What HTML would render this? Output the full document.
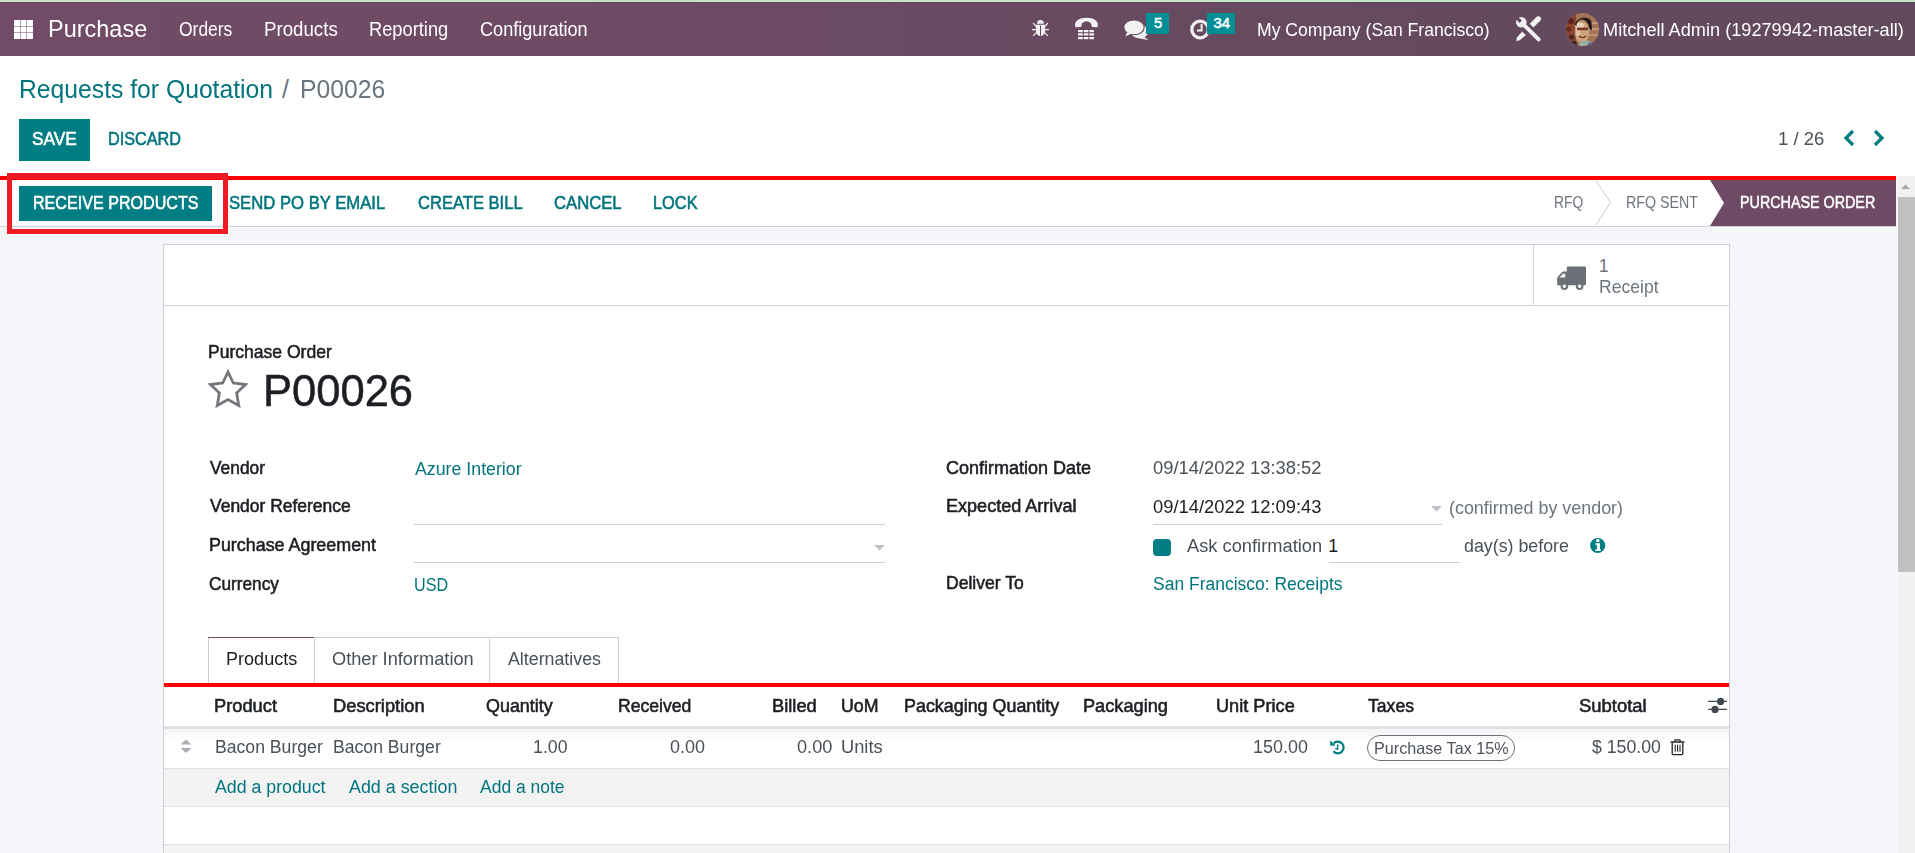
<!DOCTYPE html>
<html><head><meta charset="utf-8"><title>Purchase</title><style>
*{margin:0;padding:0;box-sizing:border-box}
html,body{width:1915px;height:853px;overflow:hidden;background:#F5F6FA;font-family:'Liberation Sans',sans-serif}
.a{position:absolute}
.t{position:absolute;white-space:nowrap;line-height:normal;font-family:'Liberation Sans',sans-serif}
svg{position:absolute;overflow:visible}
</style></head>
<body>
<div class="a" style="left:0px;top:0px;width:1915px;height:2px;background:#C6E5C7;"></div>
<div class="a" style="left:0px;top:2px;width:1915px;height:54px;background:linear-gradient(90deg,#714B67 0%,#6E4B65 35%,#6A4A62 50%,#664A5F 68%,#624A5D 100%);"></div>
<div class="a" style="left:0px;top:2px;width:1915px;height:1px;background:linear-gradient(90deg,#6B4263,#5D4357);"></div>
<div class="a" style="left:0px;top:56px;width:1915px;height:120px;background:#FFFFFF;"></div>
<div class="a" style="left:0px;top:176px;width:1896px;height:50px;background:#FFFFFF;"></div>
<div class="a" style="left:0px;top:226px;width:1896px;height:1px;background:#CDD0D6;"></div>
<div class="a" style="left:163px;top:244px;width:1567px;height:609px;background:#FFFFFF;border:1px solid #CDD0D7;border-bottom:none"></div>
<div class="a" style="left:164px;top:305px;width:1565px;height:1px;background:#CED1D8;"></div>
<div class="a" style="left:1533px;top:245px;width:1px;height:60px;background:#D3D6DC;"></div>
<div class="a" style="left:1896px;top:176px;width:19px;height:677px;background:#F1F1F1;border-left:2px solid #F7F7F7"></div>
<div class="a" style="left:1898px;top:197px;width:17px;height:375px;background:#C1C1C1;"></div>
<svg style="left:1898px;top:180px" width="15" height="14"><polygon points="3,9 12,9 7.5,4.5" fill="#A3AFA3"/></svg>
<svg style="left:14px;top:20px" width="19" height="19"><rect x="0.0" y="0.0" width="6" height="6" fill="#fff"/><rect x="6.5" y="0.0" width="6" height="6" fill="#fff"/><rect x="13.0" y="0.0" width="6" height="6" fill="#fff"/><rect x="0.0" y="6.5" width="6" height="6" fill="#fff"/><rect x="6.5" y="6.5" width="6" height="6" fill="#fff"/><rect x="13.0" y="6.5" width="6" height="6" fill="#fff"/><rect x="0.0" y="13.0" width="6" height="6" fill="#fff"/><rect x="6.5" y="13.0" width="6" height="6" fill="#fff"/><rect x="13.0" y="13.0" width="6" height="6" fill="#fff"/></svg>
<div class="a" style="left:19px;top:119px;width:71px;height:42px;background:#017E84;"></div>
<svg style="left:1840px;top:126px" width="50" height="24"><polyline points="13,5 6,12 13,19" fill="none" stroke="#017E84" stroke-width="3.2"/><polyline points="35,5 42,12 35,19" fill="none" stroke="#017E84" stroke-width="3.2"/></svg>
<div class="a" style="left:19px;top:186px;width:193px;height:35px;background:#017E84;"></div>
<svg style="left:1590px;top:180px" width="30" height="46"><polyline points="6,1 20.5,22.5 6,45" fill="none" stroke="#C9CBD0" stroke-width="1"/></svg>
<svg style="left:1700px;top:180px" width="196" height="46"><polygon points="10,0 196,0 196,46 10,46 24,23" fill="#6E4A65"/></svg>
<div class="a" style="left:0px;top:176px;width:1896px;height:4px;background:#FF0000;"></div>
<div class="a" style="left:7px;top:173px;width:221px;height:61px;background:transparent;border:5px solid #ED1C24;border-top-width:6px"></div>
<svg style="left:1556px;top:265px" width="32" height="26" viewBox="0 0 32 26">
<rect x="10.8" y="1.6" width="19.2" height="18.6" rx="1.2" fill="#6B6F76"/>
<path d="M1.2 20.2 V13.2 Q1.2 12.4 1.8 11.8 L6 7.2 Q6.6 6.6 7.4 6.6 H11 V20.2 z" fill="#6B6F76"/>
<path d="M3.4 12.6 L7 8.8 H9.2 V12.6 z" fill="#fff"/>
<circle cx="8.4" cy="21.2" r="3.8" fill="#6B6F76"/><circle cx="8.4" cy="21.2" r="1.7" fill="#fff"/>
<circle cx="23.6" cy="21.2" r="3.8" fill="#6B6F76"/><circle cx="23.6" cy="21.2" r="1.7" fill="#fff"/>
</svg>
<svg style="left:207px;top:369px" width="42" height="41" viewBox="0 0 42 41"><polygon points="21,3 26.3,14 38.5,15.5 29.6,24 31.8,36.5 21,30.5 10.2,36.5 12.4,24 3.5,15.5 15.7,14" fill="none" stroke="#75777C" stroke-width="2.8" stroke-linejoin="miter"/></svg>
<div class="a" style="left:414px;top:524px;width:471px;height:1px;background:#CED0D5;"></div>
<div class="a" style="left:414px;top:562px;width:471px;height:1px;background:#CED0D5;"></div>
<div class="a" style="left:1153px;top:524px;width:289px;height:1px;background:#CED0D5;"></div>
<div class="a" style="left:1329px;top:562px;width:131px;height:1px;background:#CED0D5;"></div>
<svg style="left:874px;top:545px" width="11" height="6"><polygon points="0,0 11,0 5.5,5.5" fill="#BFC1C7"/></svg>
<svg style="left:1431px;top:506px" width="11" height="6"><polygon points="0,0 11,0 5.5,5.5" fill="#BFC1C7"/></svg>
<div class="a" style="left:1153px;top:539px;width:18px;height:17px;background:#017E84;border-radius:4px"></div>
<svg style="left:1590px;top:538px" width="16" height="16" viewBox="0 0 16 16"><circle cx="7.7" cy="7.5" r="7.6" fill="#017E84"/><rect x="6.2" y="1.2" width="3.2" height="2.7" rx="0.5" fill="#fff"/><path d="M5.2 5.3 H10 V11.6 H10.8 V13 H5.2 V11.6 H6.9 V6.7 H5.2 z" fill="#fff"/></svg>
<div class="a" style="left:208px;top:637px;width:1px;height:46px;background:#CDD0D7;"></div>
<div class="a" style="left:208px;top:637px;width:107px;height:1px;background:#6E4A66;"></div>
<div class="a" style="left:314px;top:637px;width:1px;height:46px;background:#CDD0D7;"></div>
<div class="a" style="left:315px;top:637px;width:175px;height:1px;background:#CDD0D7;"></div>
<div class="a" style="left:489px;top:637px;width:1px;height:46px;background:#CDD0D7;"></div>
<div class="a" style="left:490px;top:637px;width:129px;height:1px;background:#CDD0D7;"></div>
<div class="a" style="left:618px;top:637px;width:1px;height:46px;background:#CDD0D7;"></div>
<div class="a" style="left:164px;top:683px;width:1565px;height:4px;background:#FF0000;"></div>
<div class="a" style="left:164px;top:726px;width:1565px;height:3px;background:#DEE1E5;"></div>
<div class="a" style="left:164px;top:729px;width:1565px;height:13px;background:linear-gradient(#F3F4F5,#FFFFFF);"></div>
<div class="a" style="left:164px;top:768px;width:1565px;height:1px;background:#DFE1E5;"></div>
<div class="a" style="left:164px;top:769px;width:1565px;height:37px;background:#F3F3F4;"></div>
<div class="a" style="left:164px;top:806px;width:1565px;height:1px;background:#DFE1E5;"></div>
<div class="a" style="left:164px;top:844px;width:1565px;height:1px;background:#DFE1E5;"></div>
<div class="a" style="left:164px;top:845px;width:1565px;height:8px;background:#F3F3F4;"></div>
<svg style="left:180px;top:739px" width="12" height="15"><polygon points="6,0.5 11.5,5.5 0.5,5.5" fill="#A9ADB3"/><polygon points="0.5,9 11.5,9 6,14" fill="#A9ADB3"/></svg>
<svg style="left:1329px;top:739px" width="17" height="17" viewBox="0 0 17 17"><path d="M4.7 4.4 A5.8 5.8 0 1 1 4.36 12.23" fill="none" stroke="#017E84" stroke-width="2.3"/><polygon points="1.2,1.5 1.2,6.7 6.7,6.6" fill="#017E84"/><path d="M8.7 5.4 V9.9 H6.2" fill="none" stroke="#017E84" stroke-width="1.5"/></svg>
<div class="a" style="left:1367px;top:735px;width:148px;height:26px;background:transparent;border:1.3px solid #6D7076;border-radius:13px"></div>
<svg style="left:1670px;top:738.6px" width="16" height="17" viewBox="0 0 16 17"><path d="M0.6 3 H14.4" stroke="#212529" stroke-width="1.5"/><path d="M4.8 2.8 V1.6 Q4.8 0.8 5.6 0.8 H9.4 Q10.2 0.8 10.2 1.6 V2.8" fill="none" stroke="#212529" stroke-width="1.2"/><path d="M2.2 3.4 V14.6 Q2.2 15.6 3.2 15.6 H11.8 Q12.8 15.6 12.8 14.6 V3.4" fill="none" stroke="#212529" stroke-width="1.3"/><path d="M5.2 5.8 V12.8 M7.6 5.8 V12.8 M10 5.8 V12.8" stroke="#212529" stroke-width="1.1"/></svg>
<svg style="left:1707px;top:696px" width="21" height="18"><path d="M1 5.4 H20 M1 13.4 H20" stroke="#404852" stroke-width="1.3"/><circle cx="13.6" cy="5.4" r="3.6" fill="#404852"/><circle cx="8" cy="13.4" r="3.6" fill="#404852"/></svg>
<svg style="left:1031px;top:19px" width="19" height="18" viewBox="0 0 19 18">
<path d="M6.1 4.8 A3.4 3.7 0 0 1 12.9 4.8 z" fill="#F2F2F2"/>
<path d="M4.9 5.7 H14.1 V11.8 A4.6 5.2 0 0 1 4.9 11.8 z" fill="#F2F2F2"/>
<path d="M9.5 6.6 V16.8" stroke="#5F4A5C" stroke-width="1"/>
<path d="M5.2 7.2 L2.4 4.4 M13.8 7.2 L16.6 4.4 M5 10.6 H1.4 M14 10.6 H17.6 M5.4 13.6 L2.6 16.4 M13.6 13.6 L16.4 16.4" stroke="#F2F2F2" stroke-width="1.3" stroke-linecap="round"/>
</svg>
<svg style="left:1074px;top:16px" width="25" height="25" viewBox="0 0 25 25">
<path d="M1 9 C1 4.5 6 1.7 12.5 1.7 C19 1.7 24 4.5 24 9 L23.4 11.2 L18 11 L17 7.6 C15.6 6 14 5.2 12.5 5.2 C11 5.2 9.4 6 8 7.6 L7 11 L1.6 11.2 z" fill="#F2F2F2"/>
<rect x="4" y="14" width="4.8" height="2.2" fill="#F2F2F2"/><rect x="9.8" y="14" width="4.6" height="2.2" fill="#F2F2F2"/><rect x="15.4" y="14" width="4.6" height="2.2" fill="#F2F2F2"/>
<rect x="4" y="17.3" width="4.8" height="2.2" fill="#F2F2F2"/><rect x="9.8" y="17.3" width="4.6" height="2.2" fill="#F2F2F2"/><rect x="15.4" y="17.3" width="4.6" height="2.2" fill="#F2F2F2"/>
<rect x="4" y="21" width="4.8" height="2.2" fill="#F2F2F2"/><rect x="9.8" y="21" width="4.6" height="2.2" fill="#F2F2F2"/><rect x="15.4" y="21" width="4.6" height="2.2" fill="#F2F2F2"/>
</svg>
<svg style="left:1120px;top:12px" width="32" height="32" viewBox="0 0 32 32">
<ellipse cx="19.5" cy="19.6" rx="9" ry="6.6" fill="#F2F2F2"/>
<polygon points="22,23.5 28.6,28 18.5,26.2" fill="#F2F2F2"/>
<ellipse cx="14" cy="15.4" rx="10.2" ry="7.4" fill="#F2F2F2" stroke="#6A4A62" stroke-width="1.1"/>
<polygon points="7,20.4 5.4,24.4 11.6,21.6" fill="#F2F2F2"/>
</svg>
<div class="a" style="left:1146px;top:13px;width:23px;height:21px;background:#028E96;"></div>
<svg style="left:1189px;top:18px" width="22" height="23" viewBox="0 0 22 23">
<circle cx="11.1" cy="11.5" r="8.3" fill="none" stroke="#F2F2F2" stroke-width="3.2"/>
<path d="M12.6 6 V12.4 H8" fill="none" stroke="#F2F2F2" stroke-width="2"/>
</svg>
<div class="a" style="left:1207px;top:13px;width:28px;height:21px;background:#028E96;"></div>
<svg style="left:1512px;top:12px" width="34" height="34" viewBox="0 0 34 34">
<defs><mask id="wm"><rect width="34" height="34" fill="#fff"/><polygon points="9.9,8.6 5.2,3.9 2.9,6.2 7.6,10.9" fill="#000"/></mask></defs>
<circle cx="9.3" cy="10.3" r="5.3" fill="#F2F2F2" mask="url(#wm)"/>
<path d="M10.6 11.6 L26.6 27.4" stroke="#F2F2F2" stroke-width="3.9" stroke-linecap="round"/>
<path d="M19.6 13.6 L26.4 6.8" stroke="#F2F2F2" stroke-width="5.2"/>
<circle cx="26.4" cy="6.8" r="2.6" fill="#F2F2F2"/>
<polygon points="10.2,19.4 13.9,23 7.4,28.6 4.3,29 4.7,25.8" fill="#F2F2F2"/>
</svg>
<svg style="left:1566px;top:13px" width="34" height="34" viewBox="0 0 34 34">
<defs><clipPath id="av"><circle cx="16.5" cy="16.5" r="16.6"/></clipPath></defs>
<g clip-path="url(#av)">
<rect width="34" height="34" fill="#A47456"/>
<rect x="0" y="0" width="10" height="34" fill="#8A4632"/>
<circle cx="5" cy="8" r="3.2" fill="#5E2418"/><circle cx="3" cy="16" r="2.6" fill="#6A2C1E"/><circle cx="5.5" cy="24" r="2.6" fill="#4A2420"/><circle cx="8" cy="31" r="3" fill="#2A2224"/>
<rect x="23" y="9" width="11" height="2" fill="#C8A080" opacity="0.8"/><rect x="23" y="15" width="11" height="2" fill="#C8A080" opacity="0.8"/><rect x="23" y="21" width="11" height="2" fill="#C8A080" opacity="0.7"/>
<ellipse cx="16" cy="19" rx="7.2" ry="11" fill="#CFA47C"/>
<ellipse cx="13.5" cy="12.5" rx="4.6" ry="3" fill="#E4D0B4"/>
<rect x="10" y="14" width="4" height="9" fill="#E6D6C0" opacity="0.6"/>
<path d="M9 12 C9 4 24 2 25.5 9 L26 17 L23.5 16 C22.5 9 19 6.5 16 6.5 C12.5 6.5 10.5 9 10.5 13 z" fill="#1E1A1E"/>
<rect x="11" y="14.6" width="11" height="2.6" fill="#6A2A1C" opacity="0.9"/>
<path d="M13 23 C15 25 18 25 20 23" stroke="#7A3A24" stroke-width="1.6" fill="none"/>
<ellipse cx="20" cy="32" rx="7" ry="4.5" fill="#9AAEA2"/>
<circle cx="24" cy="31" r="2" fill="#5A70A8"/>
</g></svg>
<div class="t" style="left:48.1px;top:15.0px;font-size:24.71px;font-weight:400;letter-spacing:0.0px;color:#FFFFFF;transform:scaleX(0.9505);transform-origin:0 0;">Purchase</div>
<div class="t" style="left:179.1px;top:18.0px;font-size:19.48px;font-weight:400;letter-spacing:0.0px;color:#FFFFFF;transform:scaleX(0.8966);transform-origin:0 0;">Orders</div>
<div class="t" style="left:264.08px;top:18.0px;font-size:19.48px;font-weight:400;letter-spacing:0.0px;color:#FFFFFF;transform:scaleX(0.9595);transform-origin:0 0;">Products</div>
<div class="t" style="left:369.12px;top:18.0px;font-size:19.48px;font-weight:400;letter-spacing:0.0px;color:#FFFFFF;transform:scaleX(0.9383);transform-origin:0 0;">Reporting</div>
<div class="t" style="left:480.07px;top:18.0px;font-size:19.48px;font-weight:400;letter-spacing:0.0px;color:#FFFFFF;transform:scaleX(0.9298);transform-origin:0 0;">Configuration</div>
<div class="t" style="left:1257.07px;top:19.0px;font-size:18.9px;font-weight:400;letter-spacing:0.0px;color:#FFFFFF;transform:scaleX(0.9315);transform-origin:0 0;">My Company (San Francisco)</div>
<div class="t" style="left:1603.04px;top:19.0px;font-size:18.9px;font-weight:400;letter-spacing:0.0px;color:#FFFFFF;transform:scaleX(0.9614);transform-origin:0 0;">Mitchell Admin (19279942-master-all)</div>
<div class="t" style="left:1154.0px;top:14.9px;font-size:14.83px;font-weight:400;letter-spacing:0.0px;color:#FFFFFF;-webkit-text-stroke:0.55px #FFFFFF;">5</div>
<div class="t" style="left:1213.5px;top:14.9px;font-size:14.83px;font-weight:400;letter-spacing:0.0px;color:#FFFFFF;-webkit-text-stroke:0.55px #FFFFFF;">34</div>
<div class="t" style="left:19.02px;top:74.7px;font-size:25.0px;font-weight:400;letter-spacing:0.0px;color:#01747C;transform:scaleX(0.9882);transform-origin:0 0;">Requests for Quotation</div>
<div class="t" style="left:282.0px;top:74.7px;font-size:25.0px;font-weight:400;letter-spacing:0.0px;color:#6C757D;">/</div>
<div class="t" style="left:300.02px;top:74.7px;font-size:25.0px;font-weight:400;letter-spacing:0.0px;color:#6C757D;transform:scaleX(0.988);transform-origin:0 0;">P00026</div>
<div class="t" style="left:32.34px;top:128.7px;font-size:18.02px;font-weight:400;letter-spacing:0.0px;color:#FFFFFF;-webkit-text-stroke:0.55px #FFFFFF;transform:scaleX(0.96);transform-origin:0 0;">SAVE</div>
<div class="t" style="left:108.3px;top:128.7px;font-size:18.02px;font-weight:400;letter-spacing:0.0px;color:#01747C;-webkit-text-stroke:0.55px #01747C;transform:scaleX(0.9);transform-origin:0 0;">DISCARD</div>
<div class="t" style="left:1777.7px;top:128.0px;font-size:18.6px;font-weight:400;letter-spacing:0.0px;color:#495057;transform:scaleX(0.9956);transform-origin:0 0;">1 / 26</div>
<div class="t" style="left:32.71px;top:192.7px;font-size:18.02px;font-weight:400;letter-spacing:0.0px;color:#FFFFFF;-webkit-text-stroke:0.55px #FFFFFF;transform:scaleX(0.8935);transform-origin:0 0;">RECEIVE PRODUCTS</div>
<div class="t" style="left:229.38px;top:192.8px;font-size:18.02px;font-weight:400;letter-spacing:0.0px;color:#01747C;-webkit-text-stroke:0.55px #01747C;transform:scaleX(0.925);transform-origin:0 0;">SEND PO BY EMAIL</div>
<div class="t" style="left:417.68px;top:192.8px;font-size:18.02px;font-weight:400;letter-spacing:0.0px;color:#01747C;-webkit-text-stroke:0.55px #01747C;transform:scaleX(0.9195);transform-origin:0 0;">CREATE BILL</div>
<div class="t" style="left:553.98px;top:192.8px;font-size:18.02px;font-weight:400;letter-spacing:0.0px;color:#01747C;-webkit-text-stroke:0.55px #01747C;transform:scaleX(0.925);transform-origin:0 0;">CANCEL</div>
<div class="t" style="left:653.49px;top:192.8px;font-size:18.02px;font-weight:400;letter-spacing:0.0px;color:#01747C;-webkit-text-stroke:0.55px #01747C;transform:scaleX(0.9083);transform-origin:0 0;">LOCK</div>
<div class="t" style="left:1554.17px;top:192.9px;font-size:16.72px;font-weight:400;letter-spacing:0.0px;color:#6C757D;transform:scaleX(0.8294);transform-origin:0 0;">RFQ</div>
<div class="t" style="left:1626.05px;top:192.9px;font-size:16.72px;font-weight:400;letter-spacing:0.0px;color:#6C757D;transform:scaleX(0.853);transform-origin:0 0;">RFQ SENT</div>
<div class="t" style="left:1739.84px;top:192.9px;font-size:16.72px;font-weight:400;letter-spacing:0.0px;color:#FFFFFF;-webkit-text-stroke:0.55px #FFFFFF;transform:scaleX(0.8571);transform-origin:0 0;">PURCHASE ORDER</div>
<div class="t" style="left:1598.8px;top:255.7px;font-size:17.88px;font-weight:400;letter-spacing:0.0px;color:#6C757D;">1</div>
<div class="t" style="left:1598.82px;top:277.0px;font-size:17.88px;font-weight:400;letter-spacing:0.0px;color:#6C757D;transform:scaleX(0.9831);transform-origin:0 0;">Receipt</div>
<div class="t" style="left:208.44px;top:341.0px;font-size:18.31px;font-weight:400;letter-spacing:0.0px;color:#1C1F23;-webkit-text-stroke:0.55px #1C1F23;transform:scaleX(0.9586);transform-origin:0 0;">Purchase Order</div>
<div class="t" style="left:263.26px;top:365.6px;font-size:44.19px;font-weight:400;letter-spacing:0.0px;color:#1C1F23;-webkit-text-stroke:0.5px #1C1F23;transform:scaleX(0.985);transform-origin:0 0;">P00026</div>
<div class="t" style="left:209.7px;top:457.7px;font-size:17.88px;font-weight:400;letter-spacing:0.0px;color:#1C1F23;-webkit-text-stroke:0.55px #1C1F23;transform:scaleX(0.9719);transform-origin:0 0;">Vendor</div>
<div class="t" style="left:209.7px;top:496.4px;font-size:17.88px;font-weight:400;letter-spacing:0.0px;color:#1C1F23;-webkit-text-stroke:0.55px #1C1F23;transform:scaleX(0.9771);transform-origin:0 0;">Vendor Reference</div>
<div class="t" style="left:208.7px;top:534.6px;font-size:17.88px;font-weight:400;letter-spacing:0.0px;color:#1C1F23;-webkit-text-stroke:0.55px #1C1F23;transform:scaleX(1.0012);transform-origin:0 0;">Purchase Agreement</div>
<div class="t" style="left:208.73px;top:573.8px;font-size:17.88px;font-weight:400;letter-spacing:0.0px;color:#1C1F23;-webkit-text-stroke:0.55px #1C1F23;transform:scaleX(0.9653);transform-origin:0 0;">Currency</div>
<div class="t" style="left:415.0px;top:458.6px;font-size:17.88px;font-weight:400;letter-spacing:0.0px;color:#01747C;transform:scaleX(0.9944);transform-origin:0 0;">Azure Interior</div>
<div class="t" style="left:414.1px;top:574.7px;font-size:17.88px;font-weight:400;letter-spacing:0.0px;color:#01747C;transform:scaleX(0.9028);transform-origin:0 0;">USD</div>
<div class="t" style="left:946.39px;top:457.7px;font-size:17.88px;font-weight:400;letter-spacing:0.0px;color:#1C1F23;-webkit-text-stroke:0.55px #1C1F23;transform:scaleX(1.0084);transform-origin:0 0;">Confirmation Date</div>
<div class="t" style="left:946.39px;top:496.4px;font-size:17.88px;font-weight:400;letter-spacing:0.0px;color:#1C1F23;-webkit-text-stroke:0.55px #1C1F23;transform:scaleX(1.011);transform-origin:0 0;">Expected Arrival</div>
<div class="t" style="left:946.42px;top:573.0px;font-size:17.88px;font-weight:400;letter-spacing:0.0px;color:#1C1F23;-webkit-text-stroke:0.55px #1C1F23;transform:scaleX(0.9821);transform-origin:0 0;">Deliver To</div>
<div class="t" style="left:1152.67px;top:457.7px;font-size:17.88px;font-weight:400;letter-spacing:0.0px;color:#495057;transform:scaleX(1.0284);transform-origin:0 0;">09/14/2022 13:38:52</div>
<div class="t" style="left:1152.67px;top:497.3px;font-size:17.88px;font-weight:400;letter-spacing:0.0px;color:#1C1F23;transform:scaleX(1.0284);transform-origin:0 0;">09/14/2022 12:09:43</div>
<div class="t" style="left:1449.0px;top:497.7px;font-size:17.88px;font-weight:400;letter-spacing:0.0px;color:#6C757D;transform:scaleX(1.0017);transform-origin:0 0;">(confirmed by vendor)</div>
<div class="t" style="left:1187.1px;top:535.7px;font-size:17.88px;font-weight:400;letter-spacing:0.0px;color:#495057;transform:scaleX(1.0237);transform-origin:0 0;">Ask confirmation</div>
<div class="t" style="left:1328.3px;top:535.7px;font-size:17.88px;font-weight:400;letter-spacing:0.0px;color:#1C1F23;">1</div>
<div class="t" style="left:1463.8px;top:535.9px;font-size:17.88px;font-weight:400;letter-spacing:0.0px;color:#495057;transform:scaleX(0.9971);transform-origin:0 0;">day(s) before</div>
<div class="t" style="left:1152.72px;top:573.8px;font-size:17.88px;font-weight:400;letter-spacing:0.0px;color:#01747C;transform:scaleX(0.9792);transform-origin:0 0;">San Francisco: Receipts</div>
<div class="t" style="left:225.7px;top:648.7px;font-size:18.02px;font-weight:400;letter-spacing:0.0px;color:#1C1F23;transform:scaleX(1.0029);transform-origin:0 0;">Products</div>
<div class="t" style="left:331.59px;top:648.7px;font-size:18.02px;font-weight:400;letter-spacing:0.0px;color:#495057;transform:scaleX(1.0109);transform-origin:0 0;">Other Information</div>
<div class="t" style="left:508.0px;top:648.7px;font-size:18.02px;font-weight:400;letter-spacing:0.0px;color:#495057;transform:scaleX(0.9872);transform-origin:0 0;">Alternatives</div>
<div class="t" style="left:214.07px;top:695.7px;font-size:17.73px;font-weight:400;letter-spacing:0.0px;color:#1C1F23;-webkit-text-stroke:0.55px #1C1F23;transform:scaleX(1.0317);transform-origin:0 0;">Product</div>
<div class="t" style="left:332.77px;top:695.7px;font-size:17.73px;font-weight:400;letter-spacing:0.0px;color:#1C1F23;-webkit-text-stroke:0.55px #1C1F23;transform:scaleX(1.0333);transform-origin:0 0;">Description</div>
<div class="t" style="left:486.09px;top:695.7px;font-size:17.73px;font-weight:400;letter-spacing:0.0px;color:#1C1F23;-webkit-text-stroke:0.55px #1C1F23;transform:scaleX(1.0108);transform-origin:0 0;">Quantity</div>
<div class="t" style="left:617.81px;top:695.7px;font-size:17.73px;font-weight:400;letter-spacing:0.0px;color:#1C1F23;-webkit-text-stroke:0.55px #1C1F23;transform:scaleX(0.9931);transform-origin:0 0;">Received</div>
<div class="t" style="left:772.37px;top:695.7px;font-size:17.73px;font-weight:400;letter-spacing:0.0px;color:#1C1F23;-webkit-text-stroke:0.55px #1C1F23;transform:scaleX(1.0333);transform-origin:0 0;">Billed</div>
<div class="t" style="left:841.2px;top:695.7px;font-size:17.73px;font-weight:400;letter-spacing:0.0px;color:#1C1F23;-webkit-text-stroke:0.55px #1C1F23;transform:scaleX(1.0028);transform-origin:0 0;">UoM</div>
<div class="t" style="left:903.59px;top:695.7px;font-size:17.73px;font-weight:400;letter-spacing:0.0px;color:#1C1F23;-webkit-text-stroke:0.55px #1C1F23;transform:scaleX(1.0098);transform-origin:0 0;">Packaging Quantity</div>
<div class="t" style="left:1083.17px;top:695.7px;font-size:17.73px;font-weight:400;letter-spacing:0.0px;color:#1C1F23;-webkit-text-stroke:0.55px #1C1F23;transform:scaleX(1.0259);transform-origin:0 0;">Packaging</div>
<div class="t" style="left:1216.37px;top:695.7px;font-size:17.73px;font-weight:400;letter-spacing:0.0px;color:#1C1F23;-webkit-text-stroke:0.55px #1C1F23;transform:scaleX(1.0253);transform-origin:0 0;">Unit Price</div>
<div class="t" style="left:1367.5px;top:695.7px;font-size:17.73px;font-weight:400;letter-spacing:0.0px;color:#1C1F23;-webkit-text-stroke:0.55px #1C1F23;transform:scaleX(0.9935);transform-origin:0 0;">Taxes</div>
<div class="t" style="left:1579.26px;top:695.7px;font-size:17.73px;font-weight:400;letter-spacing:0.0px;color:#1C1F23;-webkit-text-stroke:0.55px #1C1F23;transform:scaleX(1.0397);transform-origin:0 0;">Subtotal</div>
<div class="t" style="left:214.99px;top:736.7px;font-size:17.44px;font-weight:400;letter-spacing:0.0px;color:#495057;transform:scaleX(1.0105);transform-origin:0 0;">Bacon Burger</div>
<div class="t" style="left:332.79px;top:736.7px;font-size:17.44px;font-weight:400;letter-spacing:0.0px;color:#495057;transform:scaleX(1.0105);transform-origin:0 0;">Bacon Burger</div>
<div class="t" style="left:532.58px;top:736.7px;font-size:17.44px;font-weight:400;letter-spacing:0.0px;color:#495057;transform:scaleX(1.0188);transform-origin:0 0;">1.00</div>
<div class="t" style="left:670.37px;top:736.7px;font-size:17.44px;font-weight:400;letter-spacing:0.0px;color:#495057;transform:scaleX(1.0312);transform-origin:0 0;">0.00</div>
<div class="t" style="left:796.56px;top:736.7px;font-size:17.44px;font-weight:400;letter-spacing:0.0px;color:#495057;transform:scaleX(1.0438);transform-origin:0 0;">0.00</div>
<div class="t" style="left:841.15px;top:736.7px;font-size:17.44px;font-weight:400;letter-spacing:0.0px;color:#495057;transform:scaleX(1.0474);transform-origin:0 0;">Units</div>
<div class="t" style="left:1252.77px;top:736.7px;font-size:17.44px;font-weight:400;letter-spacing:0.0px;color:#495057;transform:scaleX(1.0288);transform-origin:0 0;">150.00</div>
<div class="t" style="left:1373.73px;top:738.5px;font-size:16.72px;font-weight:400;letter-spacing:0.0px;color:#4E545B;transform:scaleX(0.9686);transform-origin:0 0;">Purchase Tax 15%</div>
<div class="t" style="left:1592.0px;top:736.7px;font-size:17.44px;font-weight:400;letter-spacing:0.0px;color:#495057;transform:scaleX(1.0149);transform-origin:0 0;">$ 150.00</div>
<div class="t" style="left:215.1px;top:776.8px;font-size:17.88px;font-weight:400;letter-spacing:0.0px;color:#01747C;transform:scaleX(0.9937);transform-origin:0 0;">Add a product</div>
<div class="t" style="left:348.8px;top:776.8px;font-size:17.88px;font-weight:400;letter-spacing:0.0px;color:#01747C;transform:scaleX(1.0009);transform-origin:0 0;">Add a section</div>
<div class="t" style="left:479.8px;top:776.8px;font-size:17.88px;font-weight:400;letter-spacing:0.0px;color:#01747C;transform:scaleX(0.9791);transform-origin:0 0;">Add a note</div>
</body></html>
